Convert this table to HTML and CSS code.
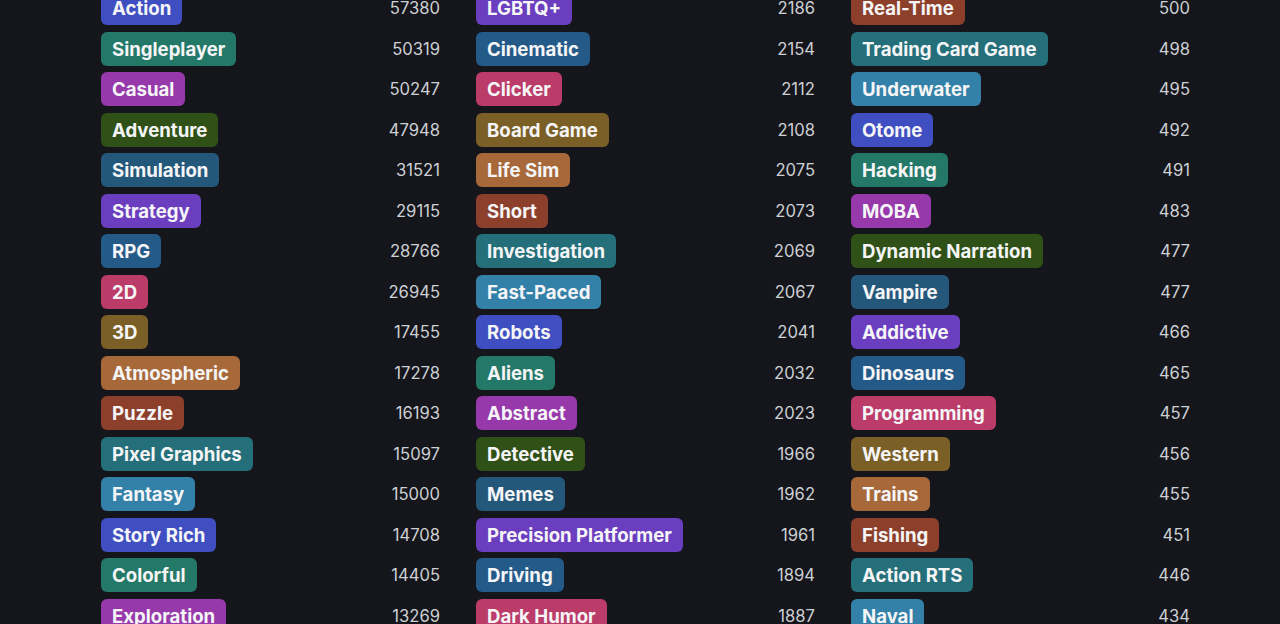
FILE: index.html
```html
<!DOCTYPE html>
<html>
<head>
<meta charset="utf-8">
<link rel="stylesheet" href="styles.css">
</head>
<body>
<div class="grid">
  <ul class="col">
    <li class="row"><span class="tag c-indigo">Action</span><span class="num">57380</span></li>
    <li class="row"><span class="tag c-tealgreen">Singleplayer</span><span class="num">50319</span></li>
    <li class="row"><span class="tag c-magenta">Casual</span><span class="num">50247</span></li>
    <li class="row"><span class="tag c-darkgreen">Adventure</span><span class="num">47948</span></li>
    <li class="row"><span class="tag c-darkblue">Simulation</span><span class="num">31521</span></li>
    <li class="row"><span class="tag c-purple">Strategy</span><span class="num">29115</span></li>
    <li class="row"><span class="tag c-blue">RPG</span><span class="num">28766</span></li>
    <li class="row"><span class="tag c-pink">2D</span><span class="num">26945</span></li>
    <li class="row"><span class="tag c-olive">3D</span><span class="num">17455</span></li>
    <li class="row"><span class="tag c-orange">Atmospheric</span><span class="num">17278</span></li>
    <li class="row"><span class="tag c-rust">Puzzle</span><span class="num">16193</span></li>
    <li class="row"><span class="tag c-teal">Pixel Graphics</span><span class="num">15097</span></li>
    <li class="row"><span class="tag c-lightblue">Fantasy</span><span class="num">15000</span></li>
    <li class="row"><span class="tag c-indigo">Story Rich</span><span class="num">14708</span></li>
    <li class="row"><span class="tag c-tealgreen">Colorful</span><span class="num">14405</span></li>
    <li class="row"><span class="tag c-magenta">Exploration</span><span class="num">13269</span></li>
  </ul>
  <ul class="col">
    <li class="row"><span class="tag c-purple">LGBTQ+</span><span class="num">2186</span></li>
    <li class="row"><span class="tag c-blue">Cinematic</span><span class="num">2154</span></li>
    <li class="row"><span class="tag c-pink">Clicker</span><span class="num">2112</span></li>
    <li class="row"><span class="tag c-olive">Board Game</span><span class="num">2108</span></li>
    <li class="row"><span class="tag c-orange">Life Sim</span><span class="num">2075</span></li>
    <li class="row"><span class="tag c-rust">Short</span><span class="num">2073</span></li>
    <li class="row"><span class="tag c-teal">Investigation</span><span class="num">2069</span></li>
    <li class="row"><span class="tag c-lightblue">Fast-Paced</span><span class="num">2067</span></li>
    <li class="row"><span class="tag c-indigo">Robots</span><span class="num">2041</span></li>
    <li class="row"><span class="tag c-tealgreen">Aliens</span><span class="num">2032</span></li>
    <li class="row"><span class="tag c-magenta">Abstract</span><span class="num">2023</span></li>
    <li class="row"><span class="tag c-darkgreen">Detective</span><span class="num">1966</span></li>
    <li class="row"><span class="tag c-darkblue">Memes</span><span class="num">1962</span></li>
    <li class="row"><span class="tag c-purple">Precision Platformer</span><span class="num">1961</span></li>
    <li class="row"><span class="tag c-blue">Driving</span><span class="num">1894</span></li>
    <li class="row"><span class="tag c-pink">Dark Humor</span><span class="num">1887</span></li>
  </ul>
  <ul class="col">
    <li class="row"><span class="tag c-rust">Real-Time</span><span class="num">500</span></li>
    <li class="row"><span class="tag c-teal">Trading Card Game</span><span class="num">498</span></li>
    <li class="row"><span class="tag c-lightblue">Underwater</span><span class="num">495</span></li>
    <li class="row"><span class="tag c-indigo">Otome</span><span class="num">492</span></li>
    <li class="row"><span class="tag c-tealgreen">Hacking</span><span class="num">491</span></li>
    <li class="row"><span class="tag c-magenta">MOBA</span><span class="num">483</span></li>
    <li class="row"><span class="tag c-darkgreen">Dynamic Narration</span><span class="num">477</span></li>
    <li class="row"><span class="tag c-darkblue">Vampire</span><span class="num">477</span></li>
    <li class="row"><span class="tag c-purple">Addictive</span><span class="num">466</span></li>
    <li class="row"><span class="tag c-blue">Dinosaurs</span><span class="num">465</span></li>
    <li class="row"><span class="tag c-pink">Programming</span><span class="num">457</span></li>
    <li class="row"><span class="tag c-olive">Western</span><span class="num">456</span></li>
    <li class="row"><span class="tag c-orange">Trains</span><span class="num">455</span></li>
    <li class="row"><span class="tag c-rust">Fishing</span><span class="num">451</span></li>
    <li class="row"><span class="tag c-teal">Action RTS</span><span class="num">446</span></li>
    <li class="row"><span class="tag c-lightblue">Naval</span><span class="num">434</span></li>
  </ul>
</div>
</body>
</html>
```

FILE: styles.css
```css
html, body {
  margin: 0;
  padding: 0;
  background: #15161b;
  height: 100%;
  overflow: hidden;
}
body {
  font-family: Inter, "Noto Sans", sans-serif;
  color: #d2d4d8;
}
.grid {
  display: grid;
  grid-template-columns: repeat(3, 339px);
  column-gap: 36px;
  padding-left: 101px;
  margin-top: -9px;
}
.col {
  list-style: none;
  margin: 0;
  padding: 0;
  display: flex;
  flex-direction: column;
  gap: 6.5px;
}
.row {
  display: flex;
  align-items: center;
  justify-content: space-between;
  height: 34px;
}
.tag {
  display: inline-block;
  height: 34px;
  line-height: 34px;
  padding: 0 11px;
  border-radius: 6px;
  font-size: 18.6px;
  font-weight: 700;
  color: #f5f5f7;
  white-space: nowrap;
}
.num {
  font-size: 16.6px;
  color: #cdd0d4;
}
.c-indigo { background: #3f4fc1; }
.c-tealgreen { background: #237868; }
.c-magenta { background: #9739ab; }
.c-darkgreen { background: #2f5118; }
.c-darkblue { background: #24587a; }
.c-purple { background: #6b3ebf; }
.c-blue { background: #245a87; }
.c-pink { background: #bb3b69; }
.c-olive { background: #7a5f26; }
.c-orange { background: #a7683a; }
.c-rust { background: #8c3f2b; }
.c-teal { background: #246f79; }
.c-lightblue { background: #3381a8; }
```
